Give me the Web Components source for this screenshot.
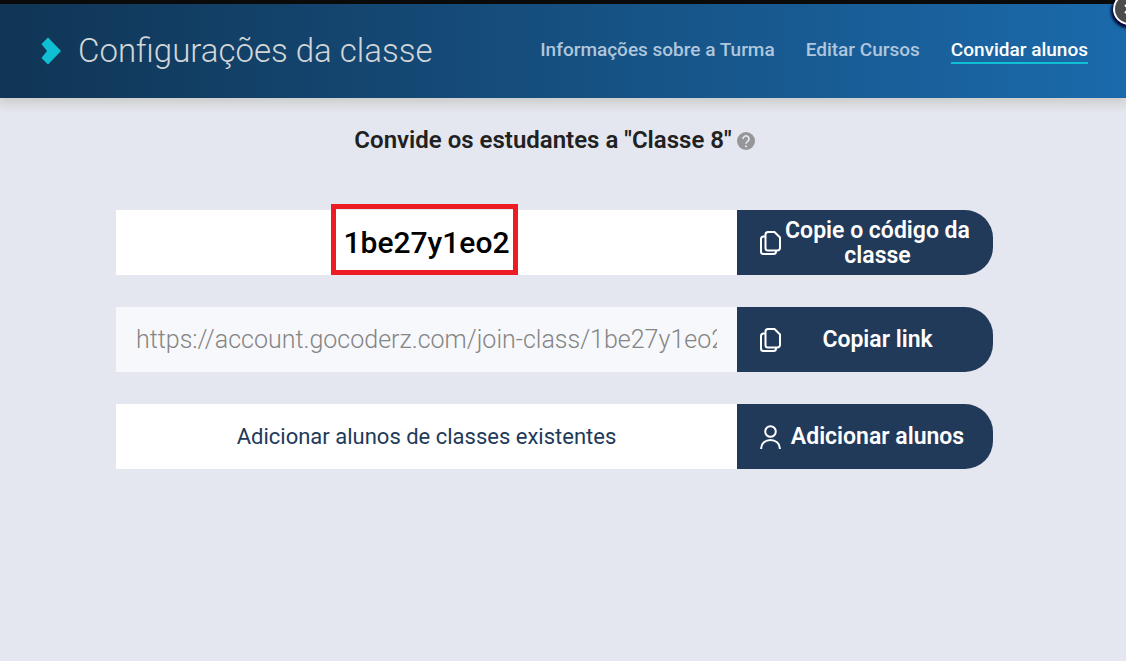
<!DOCTYPE html>
<html lang="pt-BR">
<head>
<meta charset="utf-8">
<meta name="viewport" content="width=device-width, initial-scale=1">
<title>Configurações da classe</title>
<style>
  html, body { margin: 0; min-height: 100%; background: #e4e7f0; }
  body { font-family: Roboto, "Liberation Sans", sans-serif; overflow-x: hidden; }
</style>
</head>
<body>
<class-settings></class-settings>

<script>
const define = (name, html, setup) => {
  const template = document.createElement('template');
  template.innerHTML = html;
  customElements.define(name, class extends HTMLElement {
    constructor() {
      super();
      this.attachShadow({ mode: 'open' }).append(template.content.cloneNode(true));
    }
    connectedCallback() { if (setup) setup(this, this.shadowRoot); }
  });
};

/* Navigation link; the "current" attribute marks the open tab */
define('nav-link', `
  <style>
    :host { display: block; }
    a { display: block; border-bottom: 2px solid transparent;
        color: #afc6dc; font-size: 19px; font-weight: 500; line-height: 24px;
        text-decoration: none; white-space: nowrap; }
    :host([current]) a { color: #fff; border-color: #0fc0d4; }
  </style>
  <a href="#"><slot></slot></a>`, (host, root) => {
  if (host.hasAttribute('current')) root.querySelector('a').setAttribute('aria-current', 'page');
});

/* Round close control at the corner of the dialog */
define('close-button', `
  <style>
    :host { display: block; position: absolute; top: -7px; right: -19px; }
    button { display: grid; place-items: center; width: 32px; height: 32px; padding: 0;
             border: 2px solid #fff; border-radius: 50%; background: #4c4c4c;
             box-shadow: -1px 2px 3px 1px #020432; }
    svg { display: block; }
  </style>
  <button type="button" aria-label="Fechar">
    <svg width="10" height="10" viewBox="0 0 10 10" fill="none" stroke="#fff" stroke-width="2"><path d="M1 1l8 8M9 1L1 9"/></svg>
  </button>`);

define('page-header', `
  <style>
    :host { display: block; position: relative; overflow: hidden; padding-bottom: 14px; }
    header { display: flex; align-items: center; justify-content: space-between;
             min-height: 98px; box-sizing: border-box; padding: 0 38px 0 41px;
             border-top: 4px solid #0a0a0a;
             background: linear-gradient(90deg, #103555, #1b6aab) padding-box;
             box-shadow: 0 2px 12px 3px #c8c8c4; }
    .brand { display: flex; align-items: center; gap: 17px; }
    h1 { margin: 0; color: #d3d6d8; font-size: 33px; font-weight: 300; line-height: 40px; white-space: nowrap; }
    svg { display: block; }
    nav { display: flex; gap: 31px; }
  </style>
  <header>
    <div class="brand">
      <svg width="20" height="28" viewBox="0 0 20 28" aria-hidden="true"><path d="M7 0.500L0.500 7l5.500 7-5.500 7L7 27.500 20 14z" fill="#0fc0d4"/></svg>
      <h1>Configurações da classe</h1>
    </div>
    <nav aria-label="Configurações">
      <nav-link>Informações sobre a Turma</nav-link>
      <nav-link>Editar Cursos</nav-link>
      <nav-link current>Convidar alunos</nav-link>
    </nav>
  </header>
  <close-button></close-button>`);

/* Section heading with a help mark */
define('section-title', `
  <style>
    :host { display: flex; align-items: center; justify-content: center; gap: 5px; }
    h2 { margin: 0; color: #212121; font-size: 24px; font-weight: 600; line-height: 28px; }
    button { display: grid; padding: 2px 0 0; border: 0; background: none; }
  </style>
  <h2><slot></slot></h2>
  <button type="button" aria-label="Ajuda">
    <svg width="18" height="18" viewBox="0 0 18 18" aria-hidden="true">
      <circle cx="9" cy="9" r="9" fill="#969698"/>
      <path d="M6 7a3 3 0 1 1 4.700 2.400Q9 10.500 9 11.800" fill="none" stroke="#e4e7f0" stroke-width="1.700"/>
      <circle cx="9" cy="14.300" r="1.100" fill="#e4e7f0"/>
    </svg>
  </button>`);

define('action-button', `
  <style>
    :host { display: flex; }
    button { display: flex; align-items: center; width: 100%; min-height: 65px; padding: 0 21px 0 22px;
             border: 0; border-radius: 0 28px 28px 0; background: #223a59; color: #fff;
             font-family: inherit; font-size: 23px; font-weight: 600; line-height: 25px; }
    svg { flex: none; display: none; fill: none; stroke: #fff; stroke-width: 2; }
    :host([icon="copy"]) .copy, :host([icon="user"]) .user { display: block; }
    span { flex: 1; text-align: center; }
  </style>
  <button type="button">
    <svg class="copy" width="24" height="26" viewBox="0 0 24 26" aria-hidden="true">
      <path d="M9 2h6.500L21 7.500V18a2.500 2.500 0 0 1-2.500 2.500H9A2.500 2.500 0 0 1 6.500 18V4.500A2.500 2.500 0 0 1 9 2zM6.500 6.500H4.500A2.500 2.500 0 0 0 2 9v12.500a2.500 2.500 0 0 0 2.500 2.500h10A2.500 2.500 0 0 0 17 21.500v-1"/>
    </svg>
    <svg class="user" width="24" height="26" viewBox="0 0 24 26" aria-hidden="true">
      <circle cx="11.500" cy="7.500" r="5.300"/><path d="M2.200 25v-1a9.300 8 0 0 1 18.600 0v1"/>
    </svg>
    <span><slot></slot></span>
  </button>`);

/* A field on the left with its action on the right */
define('invite-row', `
  <style>
    :host { display: grid; grid-template-columns: minmax(0, 1fr) 256px; }
    .field { position: relative; display: grid; align-items: center; background: #fff; text-align: center; }
  </style>
  <div class="field"><slot name="field"></slot></div>
  <slot></slot>`);

define('class-code', `
  <style>
    :host { display: block; color: #000; font-size: 30px; font-weight: 500; line-height: 36px; }
    /* highlight frame laid over the row */
    i { position: absolute; top: -6px; bottom: 0; left: calc(50% - 96px); width: 177px; border: 5px solid #ed1c24; }
  </style>
  <slot></slot><i></i>`);

define('link-field', `
  <style>
    :host { display: grid; height: 100%; }
    input { width: 100%; box-sizing: border-box; padding: 0 20px; border: 0; border-radius: 0;
            background: #f7f8fb; color: #858585; font-family: inherit; font-size: 25px; font-weight: 300; }
  </style>
  <input type="text" readonly aria-label="Link da classe">`, (host, root) => {
  root.querySelector('input').value = host.getAttribute('value');
});

define('field-note', `
  <style>:host { display: block; color: #223a59; font-size: 22px; line-height: 28px; }</style>
  <slot></slot>`);

define('class-settings', `
  <style>
    :host { display: block; }
    main { padding: 14px 133px 40px 116px; }
    .rows { display: grid; gap: 32px; margin-top: 56px; }
  </style>
  <page-header></page-header>
  <main>
    <section-title>Convide os estudantes a "Classe 8"</section-title>
    <div class="rows">
      <invite-row>
        <class-code slot="field">1be27y1eo2</class-code>
        <action-button icon="copy">Copie o código da classe</action-button>
      </invite-row>
      <invite-row>
        <link-field slot="field" value="https://account.gocoderz.com/join-class/1be27y1eo2"></link-field>
        <action-button icon="copy">Copiar link</action-button>
      </invite-row>
      <invite-row>
        <field-note slot="field">Adicionar alunos de classes existentes</field-note>
        <action-button icon="user">Adicionar alunos</action-button>
      </invite-row>
    </div>
  </main>`);
</script>
</body>
</html>
